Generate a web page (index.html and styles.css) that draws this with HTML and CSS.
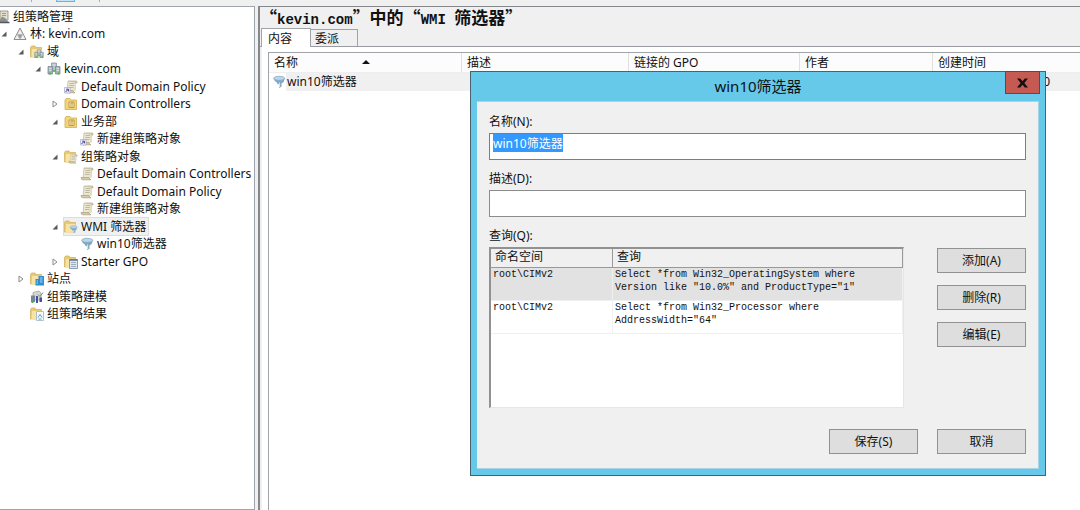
FILE: index.html
```
<!DOCTYPE html>
<html lang="zh-CN">
<head>
    <meta charset="UTF-8">
    <title>组策略管理</title>
    <link rel="stylesheet" href="styles.css">
</head>
<body>
    <!-- icon set -->
    <svg class="defs" width="0" height="0">
        <symbol id="scroll" viewBox="0 0 14 14">
            <path d="M4 1h8q1.500 0 1 2h-2v8H3z" fill="#ece7d2"/>
            <path d="M4 1h8q1.500 0 1 2h-1.800" fill="#d9d1b2" stroke="#b5ab8b" stroke-width=".7"/>
            <path d="M4 1L3.200 10M11.200 3v7.500" fill="none" stroke="#c0b898" stroke-width=".7"/>
            <path d="M1 10.500h8q.5 2 2 2.300H3q-2 0-2-2.300z" fill="#d6cba5" stroke="#a69c7b" stroke-width=".7"/>
            <path d="M5.500 3.500H10M5.300 5.500h4.500M5 7.500h4.500" stroke="#b3ad98" stroke-width=".8"/>
        </symbol>
        <symbol id="link" viewBox="0 0 14 14">
            <use href="#scroll"/>
            <path d="M.5 7.500h5.500v5.500H.5z" fill="#eef0fa" stroke="#a7abc9" stroke-width=".7"/>
            <path d="M1.500 12L4 9.500M2.200 9.200h2.200v2.200" fill="none" stroke="#3b3fa0"/>
        </symbol>
        <symbol id="folder" viewBox="0 0 14 14">
            <path d="M.5 2.500L1.500 1H5l1 1.500h5.500V12h-11z" fill="#e8c976" stroke="#d0ae58" stroke-width=".7"/>
            <path d="M2 4h9.500v8.500H1.500z" fill="#f8e3a2"/>
        </symbol>
        <symbol id="root" viewBox="0 0 14 14">
            <path d="M4 1h8v9H4z" fill="#e3dfcc" stroke="#8d8974" stroke-width=".8"/>
            <path d="M6 3.500h4M6 5.500h4" stroke="#8d8974" stroke-width=".8"/>
            <path d="M4 10l2-3.500L9 8l3.500 4H3z" fill="#8d9090"/>
            <path d="M1 12.500h12.500" stroke="#55585a" stroke-width="1.500"/>
        </symbol>
        <symbol id="forest" viewBox="0 0 14 14">
            <path d="M7 1l6 11.500H1z" fill="#c9c9c9" stroke="#858585" stroke-width=".9"/>
            <path d="M7 2.500l2.300 4.700H4.700zM4 8l2.200 4H2zM10 8l2 4H8z" fill="#f1f1f1"/>
            <path d="M4.700 7.500h4.600L7 12z" fill="#9a9a9a"/>
        </symbol>
        <symbol id="servers" viewBox="0 0 14 14">
            <path d="M4.500 1h5v8h-5z" fill="#b7c1c8" stroke="#808d96" stroke-width=".7"/>
            <path d="M1 4.500h4.500V12H1zM8.500 4.500H13V12H8.500z" fill="#a5b1b9" stroke="#75838d" stroke-width=".7"/>
            <path d="M5.500 3h3M2 6.300h2.500M9.500 6.300H12M2 8.300h2.500M9.500 8.300H12" stroke="#e8eef1" stroke-width=".9"/>
            <path d="M2 10.500h2v2H2zM10.500 10.500h2v2h-2zM6.200 8h1.600v2H6.200z" fill="#46c23e"/>
        </symbol>
        <symbol id="domains" viewBox="0 0 14 14">
            <use href="#folder"/>
            <use href="#servers" x="4" y="4" width="10" height="10"/>
        </symbol>
        <symbol id="ou" viewBox="0 0 14 14">
            <path d="M1 3l1-1.500h4L7 3h5.500v9.500H1z" fill="#f3d478" stroke="#d1ad4f" stroke-width=".8"/>
            <path d="M5 5h5v5.500H5z" fill="#fdf1c6" stroke="#ad8a38" stroke-width=".8"/>
            <path d="M6 7h3M6 9h3M8 5v2" stroke="#ad8a38" stroke-width=".8"/>
        </symbol>
        <symbol id="gpos" viewBox="0 0 14 14">
            <use href="#folder"/>
            <use href="#scroll" x="4" y="4" width="10" height="10"/>
        </symbol>
        <symbol id="filter" viewBox="0 0 14 14">
            <path d="M1.500 3.500q.5 2.500 3.500 4V8.500l2 1V13l2.500-1.200V8.500q3-1.500 3.300-5z" fill="#7fa6c3"/>
            <path d="M7.500 7.500V12" stroke="#d5e6f2" stroke-width="1.200"/>
            <ellipse cx="7.200" cy="3.300" rx="5.600" ry="2" fill="#bcd6e8" stroke="#84abc8" stroke-width=".8"/>
        </symbol>
        <symbol id="wmi" viewBox="0 0 14 14">
            <use href="#folder"/>
            <use href="#filter" x="5" y="5" width="9" height="9"/>
        </symbol>
        <symbol id="starter" viewBox="0 0 14 14">
            <use href="#folder"/>
            <path d="M5.500 4.500h8v9h-8z" fill="#dfe7ee" stroke="#7389a0" stroke-width=".8"/>
            <path d="M5.500 5h8" stroke="#587795" stroke-width="1.500"/>
            <path d="M7 7.500h5M7 9.500h5M7 11.500h5" stroke="#8ba0b4" stroke-width=".8"/>
        </symbol>
        <symbol id="sites" viewBox="0 0 14 14">
            <use href="#folder"/>
            <path d="M5.500 7h3V4H14v9.500H5.500z" fill="#2b8fd2"/>
            <path d="M10 6h2.500M10 8h2.500M10 10h2.500M6.500 9H8M6.500 11H8" stroke="#b5dff8" stroke-width=".9"/>
        </symbol>
        <symbol id="model" viewBox="0 0 14 14">
            <path d="M3 2.500L9 1l2 2v7H3z" fill="#d3d8cb" stroke="#a3a899" stroke-width=".8"/>
            <path d="M1 5.500h4V12H1z" fill="#77868f"/>
            <path d="M1.500 11h2v2h-2z" fill="#3fb63c"/>
            <path d="M6 6h2v7H6zM9.500 7.500H12V12H9.500z" fill="#444ea8"/>
            <path d="M8 4.500l2 2 3-4" fill="none" stroke="#737dba"/>
        </symbol>
        <symbol id="results" viewBox="0 0 14 14">
            <use href="#folder"/>
            <path d="M6.500 4.500H13.500v9h-7z" fill="#f5f9fc" stroke="#a5b3be" stroke-width=".8"/>
            <path d="M8 10.500l2-3 2 3M8.500 12h3" fill="none" stroke="#5b9fd4"/>
        </symbol>
        <symbol id="open" viewBox="0 0 6 6">
            <path d="M5.500.5v5h-5z" fill="#595959"/>
        </symbol>
        <symbol id="closed" viewBox="0 0 6 8">
            <path d="M1 1l4 3-4 3z" fill="#fff" stroke="#8a8a8a"/>
        </symbol>
    </svg>

    <div class="toolbar">
        <span class="sep"></span>
        <span class="tool"></span>
        <span class="sep"></span>
    </div>

    <div class="console">
        <ul class="tree">
            <li class="root"><svg class="icon"><use href="#root"/></svg><span>组策略管理</span></li>
            <li class="l1"><svg class="arrow"><use href="#open"/></svg><svg class="icon"><use href="#forest"/></svg><span>林: kevin.com</span></li>
            <li class="l2"><svg class="arrow"><use href="#open"/></svg><svg class="icon"><use href="#domains"/></svg><span>域</span></li>
            <li class="l3"><svg class="arrow"><use href="#open"/></svg><svg class="icon"><use href="#servers"/></svg><span>kevin.com</span></li>
            <li class="l4 leaf"><svg class="icon"><use href="#link"/></svg><span>Default Domain Policy</span></li>
            <li class="l4"><svg class="arrow shut"><use href="#closed"/></svg><svg class="icon"><use href="#ou"/></svg><span>Domain Controllers</span></li>
            <li class="l4"><svg class="arrow"><use href="#open"/></svg><svg class="icon"><use href="#ou"/></svg><span>业务部</span></li>
            <li class="l5 leaf"><svg class="icon"><use href="#link"/></svg><span>新建组策略对象</span></li>
            <li class="l4"><svg class="arrow"><use href="#open"/></svg><svg class="icon"><use href="#gpos"/></svg><span>组策略对象</span></li>
            <li class="l5 leaf"><svg class="icon"><use href="#scroll"/></svg><span>Default Domain Controllers</span></li>
            <li class="l5 leaf"><svg class="icon"><use href="#scroll"/></svg><span>Default Domain Policy</span></li>
            <li class="l5 leaf"><svg class="icon"><use href="#scroll"/></svg><span>新建组策略对象</span></li>
            <li class="l4"><svg class="arrow"><use href="#open"/></svg><div class="current"><svg class="icon"><use href="#wmi"/></svg><span>WMI 筛选器</span></div></li>
            <li class="l5 leaf"><svg class="icon"><use href="#filter"/></svg><span>win10筛选器</span></li>
            <li class="l4"><svg class="arrow shut"><use href="#closed"/></svg><svg class="icon"><use href="#starter"/></svg><span>Starter GPO</span></li>
            <li class="l2"><svg class="arrow shut"><use href="#closed"/></svg><svg class="icon"><use href="#sites"/></svg><span>站点</span></li>
            <li class="l2 leaf"><svg class="icon"><use href="#model"/></svg><span>组策略建模</span></li>
            <li class="l2 leaf"><svg class="icon"><use href="#results"/></svg><span>组策略结果</span></li>
        </ul>

        <main class="pane">
            <h1>“<span class="latin">kevin.com</span>”中的“<span class="latin">WMI </span>筛选器”</h1>
            <div class="tabs">
                <button class="tab active" type="button">内容</button>
                <button class="tab" type="button">委派</button>
            </div>
            <div class="page">
                <div class="listview">
                    <table class="list">
                        <colgroup>
                            <col class="c-name"><col class="c-desc"><col class="c-gpo"><col class="c-author"><col>
                        </colgroup>
                        <thead>
                            <tr>
                                <th class="sorted">名称</th>
                                <th>描述</th>
                                <th>链接的 GPO</th>
                                <th>作者</th>
                                <th>创建时间</th>
                            </tr>
                        </thead>
                        <tbody>
                            <tr>
                                <td><div class="item"><svg class="icon"><use href="#filter"/></svg><span>win10筛选器</span></div></td>
                                <td></td>
                                <td></td>
                                <td></td>
                                <td class="time">0</td>
                            </tr>
                        </tbody>
                    </table>
                </div>
            </div>
        </main>
    </div>

    <form class="dialog" role="dialog" aria-labelledby="dlg-title">
        <div class="titlebar">
            <h2 id="dlg-title">win10筛选器</h2>
            <button class="close" type="button" aria-label="关闭">
                <svg width="11" height="10" viewBox="0 0 12 10"><path d="M0 0h3.500L6 3l2.500-3H12L8 5l4 5H8.500L6 7l-2.500 3H0l4-5z" fill="#111"/></svg>
            </button>
        </div>
        <div class="client">
            <label for="name">名称(N):</label>
            <input id="name" class="name" type="text" value="win10筛选器" onfocus="this.select()" autofocus>
            <label for="desc">描述(D):</label>
            <input id="desc" type="text">
            <div class="caption" id="query-label">查询(Q):</div>
            <div class="query">
                <div class="grid">
                    <table aria-labelledby="query-label">
                        <colgroup><col class="c-ns"><col></colgroup>
                        <thead>
                            <tr><th>命名空间</th><th>查询</th></tr>
                        </thead>
                        <tbody>
                            <tr class="picked">
                                <td>root\CIMv2</td>
                                <td>Select *from Win32_OperatingSystem where<br>Version like "10.0%" and ProductType="1"</td>
                            </tr>
                            <tr>
                                <td>root\CIMv2</td>
                                <td>Select *from Win32_Processor where<br>AddressWidth="64"</td>
                            </tr>
                        </tbody>
                    </table>
                </div>
                <div class="side">
                    <button class="btn" type="button">添加(A)</button>
                    <button class="btn" type="button">删除(R)</button>
                    <button class="btn" type="button">编辑(E)</button>
                </div>
            </div>
            <div class="actions">
                <button class="btn default" type="submit">保存(S)</button>
                <button class="btn" type="button">取消</button>
            </div>
        </div>
    </form>
</body>
</html>
```
FILE: styles.css
```
* { box-sizing: border-box; }
body {
    margin: 0; min-height: 100vh; display: flex; flex-direction: column;
    background: #f0f0f0; color: #111; overflow: hidden;
    font: 12px/16px "Noto Sans", "Noto Sans CJK SC", sans-serif;
}
button, input { font: inherit; color: inherit; }
.defs { position: absolute; }
.icon { width: 14px; height: 14px; flex: none; }

/* bottom edge of the toolbar */
.toolbar { display: flex; height: 6px; padding-left: 31px; gap: 24px; }
.sep { width: 1px; height: 2px; background: #aaa; }
.tool { width: 19px; height: 2px; background: #c5e3f5; border: 1px solid #69b3de; border-top: 0; }

.console { flex: 1; display: flex; gap: 3px; }

/* console tree */
.tree {
    width: 255px; flex: none; margin: 0; padding: 1px 0 0; list-style: none; overflow: hidden;
    background: #fff; border: 1px solid #a0a4ab; border-left: 0;
}
.tree li { display: flex; align-items: center; height: 17px; white-space: nowrap; }
.tree li:nth-child(even) { height: 18px; }
.tree span { margin-left: 3px; }
.tree .root { margin-left: -4px; }
.tree .l2 { padding-left: 17px; }
.tree .l3 { padding-left: 34px; }
.tree .l4 { padding-left: 51px; }
.tree .l5 { padding-left: 67px; }
.tree .leaf::before { content: ""; width: 13px; flex: none; }
.arrow { width: 6px; height: 6px; margin: 0 6px 0 1px; flex: none; }
.arrow.shut { height: 8px; }
.current { display: flex; align-items: center; height: 17px; background: #f0f0f0; outline: 1px solid #dcdcdc; padding-right: 2px; }

/* result pane */
.pane { flex: 1; display: flex; flex-direction: column; min-width: 0; border: 2px solid #85878c; border-width: 1px 0 0 2px; }
h1 { height: 21px; margin: 0; font: bold 17px/20px "Noto Sans CJK SC", sans-serif; white-space: pre; }
h1 .latin { font: bold 14px/14px "Liberation Mono", monospace; }
.tabs { display: flex; align-items: flex-end; height: 19px; padding-left: 1px; border-bottom: 1px solid #989ba2; }
.tab { width: 47px; height: 17px; padding: 0 0 0 4px; text-align: left; line-height: 15px; background: #f0f0f0; border: 1px solid #a0a3a8; border-width: 1px 1px 0 0; }
.tab.active { width: 50px; height: 19px; padding-left: 6px; margin-bottom: -1px; background: #fff; border-left-width: 1px; }
.page { flex: 1; display: flex; margin-left: 2px; padding: 5px 0 0 6px; background: #fff; }
.listview { flex: 1; border: 1px solid #a0a3a8; border-width: 1px 0 0 1px; }
.list { width: 100%; table-layout: fixed; border-collapse: separate; border-spacing: 0; }
.list th { height: 20px; padding: 0 0 0 5px; text-align: left; font-weight: normal; background: #fcfcfc; border-right: 1px solid #e0e0e0; border-bottom: 1px solid #eee; }
.list th:last-child { border-right: 0; }
.list td { height: 18px; padding: 0; background: #f0f0f0; }
.list td:first-child { background: linear-gradient(to right, #fff 17px, #f0f0f0 17px); }
.sorted::after { content: ""; float: right; margin: 5px 91px 0 0; border: 4px solid transparent; border-top: 0; border-bottom-color: #111; }
.item { display: flex; align-items: center; padding-left: 3px; gap: 1px; }
.list .time { padding-right: 30px; text-align: right; }
.c-name { width: 193px; }
.c-desc { width: 167px; }
.c-gpo { width: 171px; }
.c-author { width: 133px; }

/* filter dialog */
.dialog {
    position: absolute; left: 470px; top: 71px; width: 576px; padding: 0 6px 6px;
    background: #66c9ea; border: 1px solid #46636f;
}
.titlebar { display: flex; height: 29px; justify-content: center; }
h2 { margin: 0; font-size: 15px; line-height: 28px; font-weight: normal; }
.close {
    position: absolute; right: 5px; top: -1px; width: 35px; height: 23px; padding: 0;
    display: flex; align-items: center; justify-content: center;
    background: #c55a52; border: 1px solid #7e3b3d;
}
.client { display: flex; flex-direction: column; padding: 12px 12px 14px; background: #f0f0f0; border: 1px solid #a5d5e7; border-left: 0; }
.client label, .caption { line-height: 16px; margin-bottom: 3px; }
.client input { height: 27px; margin-bottom: 11px; padding: 0 3px; background: #fff; border: 1px solid #8c8c8c; outline: 0; }
.client .name { padding: 1px 3px 8px; border-color: #5a86ac; line-height: 16px; }
.name::selection { background: #3399ff; color: #fff; }
.query { display: flex; gap: 33px; }
.grid { flex: 1; min-height: 161px; background: #fff; border: 2px solid #e6e6e6; border-width: 2px 1px 1px 2px; border-top-color: #919191; border-left-color: #919191; }
.grid table { width: 100%; table-layout: fixed; border-collapse: separate; border-spacing: 0; }
.c-ns { width: 122px; }
.grid th { height: 19px; padding: 0 0 2px 4px; line-height: 16px; text-align: left; font-weight: normal; background: #f0f0f0; border-bottom: 1px solid #999; border-right: 1px solid #999; }
.grid td { height: 33px; padding: 0 0 0 2px; vertical-align: top; font: 10px/13px "Liberation Mono", monospace; white-space: nowrap; border-right: 1px solid #f0f0f0; border-bottom: 1px solid #f0f0f0; }
.grid .picked td { background: #e2e2e2; }
.side { display: flex; flex-direction: column; gap: 12px; padding-top: 1px; }
.btn { width: 89px; height: 25px; padding: 0; background: #dedede; border: 1px solid #929292; }
.btn.default { border-color: #6a9bc3; }
.actions { display: flex; justify-content: flex-end; gap: 19px; margin-top: 21px; }
```
